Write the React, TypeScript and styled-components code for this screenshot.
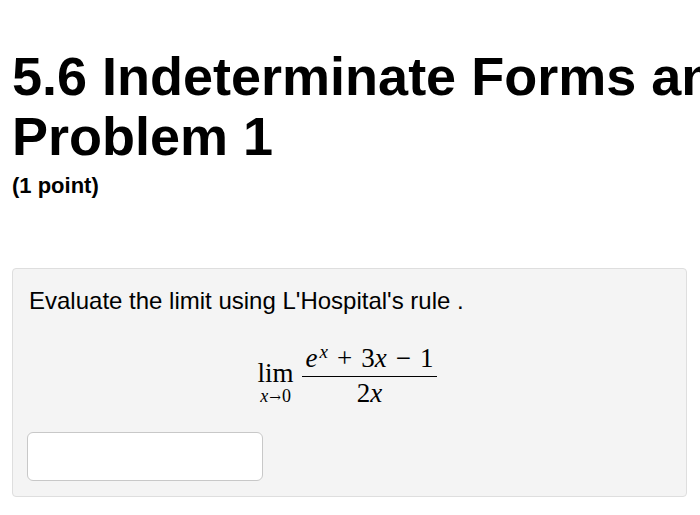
import React from "react";
import styled, { createGlobalStyle } from "styled-components";

const Global = createGlobalStyle`
  html, body { margin: 0; padding: 0; background: #ffffff; }
  body { font-family: "Liberation Sans", Arial, sans-serif; color: #000; overflow: hidden; }
`;

const Page = styled.div`
  width: 700px;
  height: 515px;
  overflow: hidden;
  box-sizing: border-box;
  padding: 46px 0 0 12px;
`;

const Title = styled.h1`
  margin: 0;
  font-size: 54px;
  line-height: 60px;
  font-weight: 700;
  white-space: nowrap;
`;

const Points = styled.div`
  margin-top: 7px;
  font-size: 22px;
  line-height: 26px;
  font-weight: 700;
`;

const Card = styled.div`
  margin-top: 69px;
  width: 675px;
  height: 229px;
  box-sizing: border-box;
  background: #f4f4f4;
  border: 1px solid #dedede;
  border-radius: 4px;
  padding: 18px 14px 0 14px;
`;

const Prompt = styled.p`
  margin: 0 0 0 2px;
  font-size: 24px;
  line-height: 28px;
`;

const MathRow = styled.div`
  display: flex;
  justify-content: center;
  align-items: flex-start;
  gap: 8px;
  margin-top: 29px;
  margin-left: -4px;
  font-family: "Liberation Serif", "Times New Roman", serif;
  font-size: 27px;
`;

const Limit = styled.div`
  display: flex;
  flex-direction: column;
  align-items: center;
  margin-top: 15px;
`;

const LimWord = styled.span`
  line-height: 28px;
`;

const LimSub = styled.span`
  font-size: 18px;
  line-height: 18px;
  white-space: nowrap;
`;

const Arrow = styled.span`
  font-family: "DejaVu Serif", serif;
  font-size: 14px;
  margin: 0 1px 0 1px;
`;

const Fraction = styled.div`
  display: inline-flex;
  flex-direction: column;
  align-items: center;
`;

const Numerator = styled.div`
  padding: 0 4px 4px;
  line-height: 28px;
  white-space: nowrap;
`;

const Denominator = styled.div`
  padding-top: 2px;
  line-height: 28px;
`;

const Bar = styled.div`
  align-self: stretch;
  height: 1px;
  background: #000;
`;

const Var = styled.i`
  font-style: italic;
`;

const Sup = styled.sup`
  font-size: 19px;
  vertical-align: 9px;
  line-height: 0;
  margin-left: 2px;
`;

const Op = styled.span`
  margin: 0 9px;
`;

const AnswerInput = styled.input`
  display: block;
  margin-top: 25px;
  width: 236px;
  height: 49px;
  box-sizing: border-box;
  background: #fff;
  border: 1px solid #c8c8c8;
  border-radius: 6px;
  outline: none;
`;

export default function App() {
  return (
    <>
      <Global />
      <Page>
        <Title>
          5.6 Indeterminate Forms and L'Hospital's Rule
          <br />
          Problem 1
        </Title>
        <Points>(1 point)</Points>
        <Card>
          <Prompt>Evaluate the limit using L'Hospital's rule .</Prompt>
          <MathRow>
            <Limit>
              <LimWord>lim</LimWord>
              <LimSub>
                <Var>x</Var>
                <Arrow>→</Arrow>0
              </LimSub>
            </Limit>
            <Fraction>
              <Numerator>
                <Var>e</Var>
                <Sup>
                  <Var>x</Var>
                </Sup>
                <Op>+</Op>3<Var>x</Var>
                <Op>−</Op>1
              </Numerator>
              <Bar />
              <Denominator>
                2<Var>x</Var>
              </Denominator>
            </Fraction>
          </MathRow>
          <AnswerInput type="text" aria-label="answer" />
        </Card>
      </Page>
    </>
  );
}
